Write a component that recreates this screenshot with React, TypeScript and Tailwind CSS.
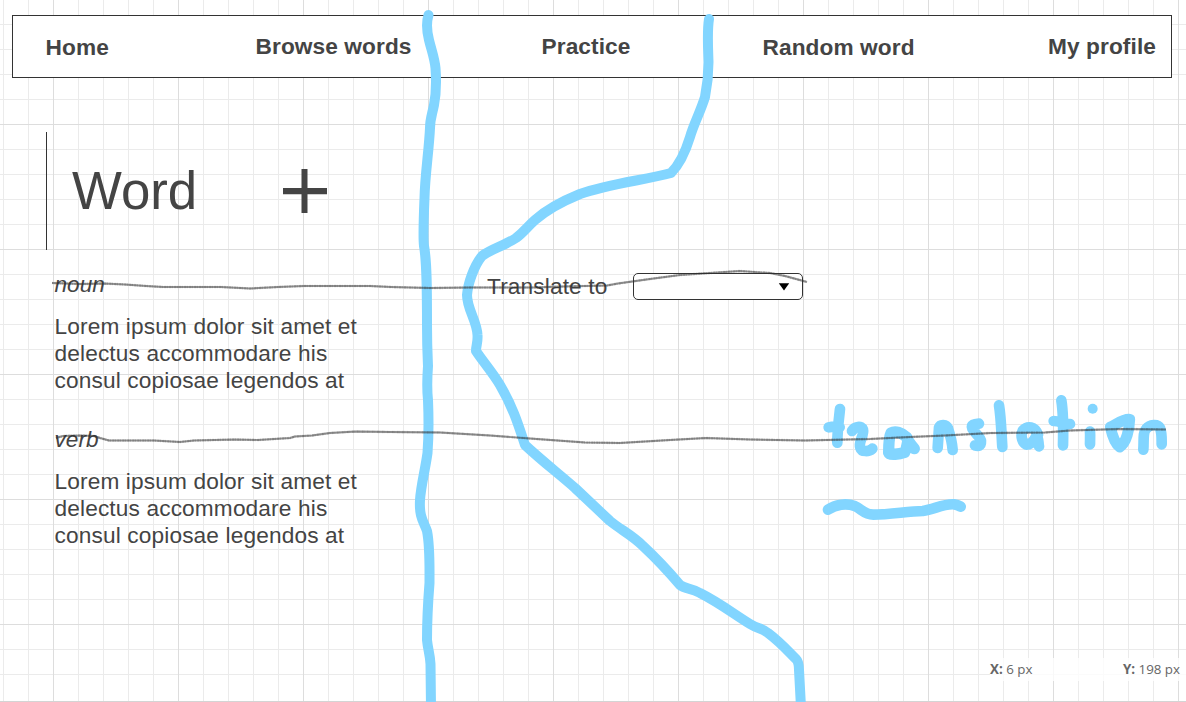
const minorX = Array.from({ length: 48 }, (_, i) => 3 + i * 25);
const minorY = Array.from({ length: 27 }, (_, i) => 24 + i * 25);
const majorX = Array.from({ length: 10 }, (_, i) => 53 + i * 125);
const majorY = Array.from({ length: 5 }, (_, i) => 124 + i * 125);

function Grid() {
  return (
    <svg className="pointer-events-none absolute inset-0" width="1186" height="702" viewBox="0 0 1186 702" shapeRendering="crispEdges">
      <g fill="#ebebeb">
        {minorX.map((x) => <rect key={x} x={x} y="0" width="1" height="702" />)}
        {minorY.map((y) => <rect key={y} x="0" y={y} width="1186" height="1" />)}
      </g>
      <g fill="#dddddd">
        {majorX.map((x) => <rect key={x} x={x} y="0" width="1" height="702" />)}
        {majorY.map((y) => <rect key={y} x="0" y={y} width="1186" height="1" />)}
        <rect x="0" y="701" width="1186" height="1" fill="#d4d4d4" />
      </g>
    </svg>
  );
}

function Marker() {
  return (
    <svg className="pointer-events-none absolute inset-0" width="1186" height="702" viewBox="0 0 1186 702" fill="none" strokeLinecap="round" strokeLinejoin="round">
      <g stroke="#82d5ff" strokeWidth="10">
        <path d="M428.5 15 C426 23 427 32 429 40 C432 52 434.500 58 435.500 68 C436.500 82 436.500 92 434 105 C432 115 430 119 430 128 C429 150 425 175 424.500 198 C423.500 222 423 238 424 246 C427 262 427 290 427 325 C427 345 427.500 355 428 366 C427 380 427 391 428 400 C429 425 428.500 440 427.500 453 C425 471 421 485 420 500 C419 518 424 522 427 531 C430 546 429.500 565 429.500 583 C428 602 427 622 427 640 C428 650 430 654 430.500 664 L431 707" />
        <path d="M709 19 C707 31 708 46 708.500 62 C708.500 78 707 87 705 97 C700 113 694 123 690 137 C686 150 680 164 671 173 C645 180 608 184 580 194 C558 203 544 212 535 220 C527 227 524 232 516 238 C506 245 491 249 482 256 C474 266 468 283 467 295 C467 309 477 321 477.500 335 C478 343 476 345 476 351 C484 363 493 373 500 385 C514 409 519 427 525 445 C541 460 559 474 575 488 L610 521 C621 530 632 535 643 546 C657 559 669 572 680 585 C685 589 691 588 700 593 C720 603 735 615 750 624 C758 629 762 628 768 633 C780 642 788 651 796 659 C798 661 799 665 799 670 L801 707" />
      </g>
      <g transform="translate(810 380) scale(.333333)" stroke="#82d5ff" strokeWidth="32">
        <path d="M54 389 C77 373 109 369 134 378 C156 388 163 404 190 404 C240 404 292 394 338 393 C373 388 401 370 433 373 C443 374 447 377 452 380" />
        <path d="M90 87 C86 122 82 154 82 188 M56 142 C69 139 79 139 89 142" />
        <path d="M126 153 C134 139 155 136 159 149 C163 166 144 186 151 203 C155 217 177 215 187 206" />
        <path strokeWidth="34" d="M290 172 C276 158 256 152 243 159 C236 173 236 193 236 218 C239 227 269 222 284 217 C291 206 291 190 294 181 C300 190 306 198 313 206" />
        <path d="M383 204 L387 143 C391 132 408 132 414 145 C421 166 426 183 428 210" />
        <path d="M507 131 C493 132 482 134 487 146 C496 162 512 171 513 183 C514 199 504 199 495 196" />
        <path d="M567 76 C573 111 574 156 577 201" />
        <path d="M684 164 C674 139 653 136 638 152 C630 169 638 189 649 194 C668 194 674 177 679 168 C688 178 684 188 687 199" />
        <path d="M754 61 C761 104 760 155 759 196 M731 123 C749 123 764 133 780 132" />
        <path d="M840 155 C841 167 840 180 840 193" />
        <path strokeWidth="33" d="M901 141 C905 159 912 188 929 201 C950 188 958 147 959 118 C943 115 920 132 902 141" />
        <path d="M1000 209 C1002 184 998 158 1008 147 C1020 132 1043 131 1050 144 C1056 159 1055 177 1055 193" />
        <circle cx="848" cy="86" r="15" fill="#82d5ff" stroke="none" />
      </g>
    </svg>
  );
}

const pencilLines = [
  "M52 283 L66 283.500 L81 284 L104 283.500 L125 284.500 L146 286 L163 287 L190 287 L221 287 L250 288.500 L278 287 L304 286 L340 286 L370 286 L391 287 L430 288 L470 287.500 L533 287.500 L563 286.500 L607 285.500 L618 283.500 L650 279 L680 275 L710 273 L740 271 L770 273 L785 276 L807 282",
  "M56 438 L63 436 L80 435.500 L94 436 L100 438 L109 440.500 L154 440.500 L180 442 L194 440.500 L235 439.500 L258 440 L290 438 L295 436.500 L312 435.500 L330 433 L356 431.500 L390 432 L440 432.500 L490 435.500 L530 438.500 L585 442.500 L620 443 L670 440 L706 438 L750 439.500 L805 440.500 L870 439 L910 437 L945 435.500 L991 433 L1045 432.500 L1070 430.500 L1120 429 L1166 429.500",
];

function Pencil() {
  return (
    <svg className="pointer-events-none absolute inset-0" width="1186" height="702" viewBox="0 0 1186 702" fill="none" stroke="#303030" strokeLinejoin="round">
      {pencilLines.map((d) => (
        <g key={d}>
          <path d={d} strokeWidth="1.900" opacity=".52" />
          <path d={d} strokeWidth="2.600" strokeDasharray="1 1.300 2 .700" opacity=".2" />
        </g>
      ))}
    </svg>
  );
}

function Definition({ kind }: { kind: string }) {
  return (
    <section className="h-[155px]">
      <h2 className="pb-[15px] italic leading-[27px] tracking-normal">{kind}</h2>
      <p className="leading-[27px] whitespace-nowrap">
        Lorem ipsum dolor sit amet et<br />
        delectus accommodare his<br />
        consul copiosae legendos at
      </p>
    </section>
  );
}

export default function App() {
  return (
    <div className="relative h-[702px] w-[1186px] overflow-hidden bg-white font-['Liberation_Sans',sans-serif] text-[22.67px] tracking-[0.14px] text-[#444444]">
      <Grid />
      <div className="relative flex h-full flex-col pt-[15px]">
        <nav className="ml-3 grid h-[63px] w-[1160px] shrink-0 grid-cols-[210px_286px_221px_285.5px_auto] items-center border border-[#333333] bg-white pl-[32.5px] leading-[27px] font-bold tracking-[0.1px] whitespace-nowrap">
          <a className="pt-px">Home</a>
          <a className="pb-px">Browse words</a>
          <a className="pb-px">Practice</a>
          <a className="pt-px">Random word</a>
          <a className="pb-px">My profile</a>
        </nav>
        <header className="mt-[54px] ml-[46px] flex h-[118px] w-[300px] shrink-0 items-center border-l border-[#333333] pl-[25px]">
          <h1 className="w-[210.500px] text-[52.8px] leading-[60px] tracking-normal">Word</h1>
          <svg width="45" height="45" viewBox="0 0 45 45" fill="#444444">
            <path d="M18.500 0h6v19H44v6.300H24.500V44h-6V25.300H0V19h18.500z" />
          </svg>
        </header>
        <main className="flex pt-[21px] pl-[54.500px]">
          <div className="w-[432.500px]">
            <Definition kind="noun" />
            <Definition kind="verb" />
          </div>
          <div className="flex h-[30px] pt-0.5">
            <label className="w-[146px] leading-[27px]">Translate to</label>
            <button className="flex h-[27px] w-[170px] items-center justify-end rounded-[5px] border border-[#333333] bg-white pr-[12px]">
              <svg width="12" height="8" viewBox="0 0 12 8"><path d="M.800.300h10.400L6 7.500z" fill="#000" /></svg>
            </button>
          </div>
        </main>
        <footer className="absolute right-0 bottom-[21px] flex h-[23px] w-[196px] items-center justify-between bg-white/80 pr-[6px] font-['Open_Sans',sans-serif] text-[13.33px] tracking-normal text-[#666666]">
          <span><b>X:</b> 6 px</span>
          <span><b>Y:</b> 198 px</span>
        </footer>
      </div>
      <Marker />
      <Pencil />
    </div>
  );
}
